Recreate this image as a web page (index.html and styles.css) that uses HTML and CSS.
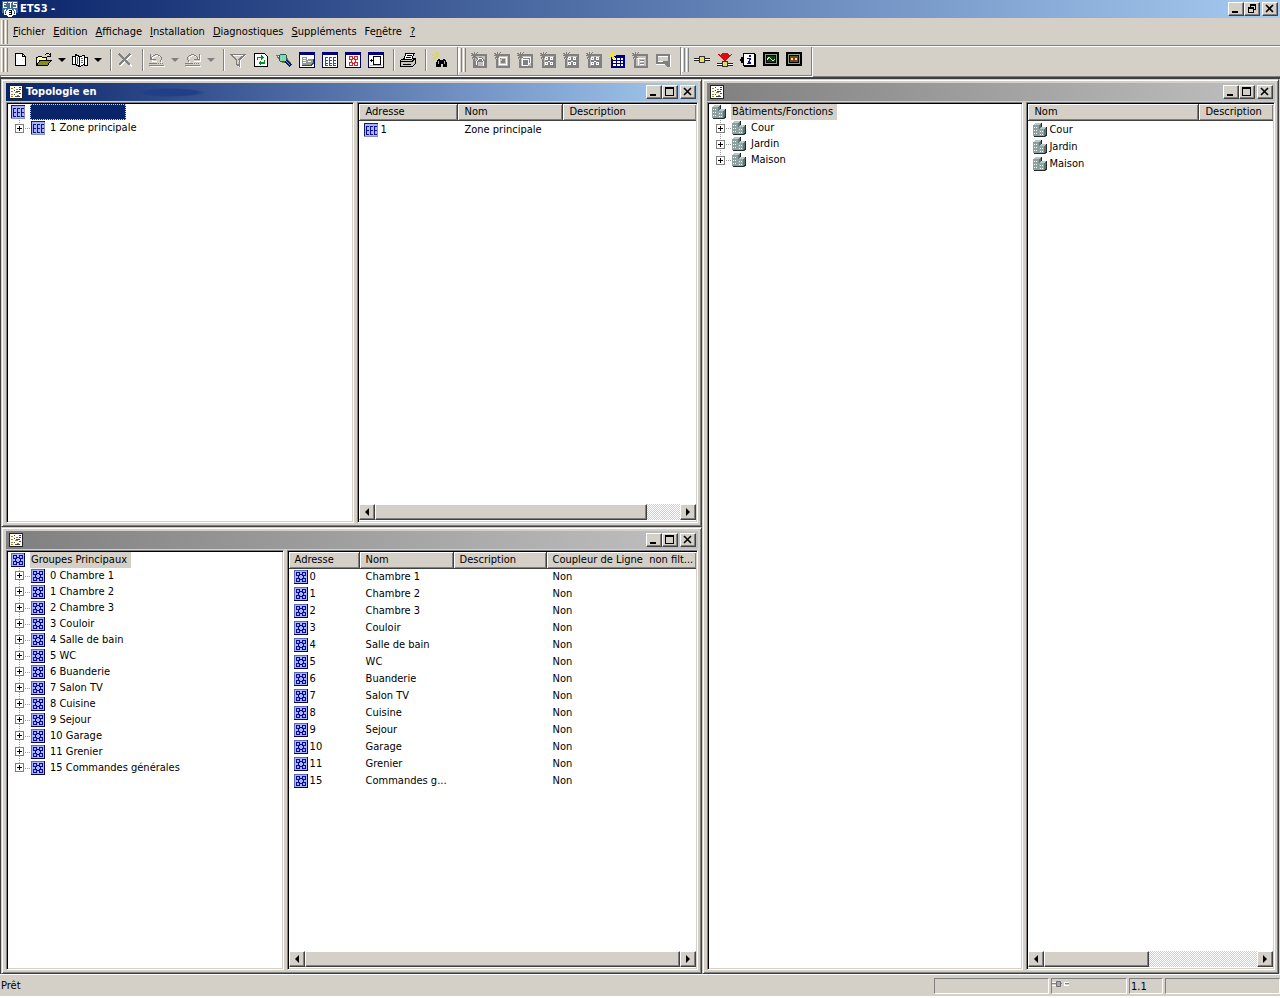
FILE: index.html
```html
<!DOCTYPE html>
<html lang="fr">
<head>
    <meta charset="UTF-8">
    <meta name="viewport" content="width=device-width, initial-scale=1.0">
    <title>ETS3</title>
    <link rel="stylesheet" href="styles.css">
</head>
<body>

<!-- Icon set -->
<svg class="sprite" aria-hidden="true">
    <symbol id="i-app" viewBox="0 0 16 16">
        <rect width="16" height="12" fill="#3c6e9c"/>
        <path d="M1 1.500h4M1 3.500h3M1 6.500h4M1.500 1v6M6 1.500h4M8 1v6M11 1.500h4M11.500 1v2.500M11 3.500h4M14.500 3.500v3M11 6.500h4" stroke="#fff" fill="none"/>
        <circle cx="8" cy="12" r="4" fill="#fff"/>
        <path d="M6.500 9.500h3v4h-3M7 11.500h2" stroke="#000" fill="none"/>
        <path d="M3.500 8.500q-2 3 0 6M12.500 8.500q2 3 0 6" stroke="#fff" fill="none"/>
    </symbol>
    <symbol id="i-doc" viewBox="0 0 16 16">
        <rect x="1.500" y="1.500" width="13" height="13" fill="#fff" stroke="#222"/>
        <path d="M3 4.500h2M3 7.500h2M3 10.500h2M3 12.500h2M8 5.500h2M7 8.500h3M9 11.500h2" stroke="#a08a20"/>
        <path d="M6 3.500h1M11 3.500h2M8 7.500h4M6 10.500h1M11 9.500h2M7 12.500h5M6 6.500h1M11 5.500h2" stroke="#444"/>
    </symbol>
    <symbol id="i-zone" viewBox="0 0 16 16">
        <rect x="1" y="1" width="14" height="14" fill="#a8b4f4"/>
        <path d="M1 1.500h14M1.500 1v13" stroke="#102060" fill="none"/>
        <path d="M1 14.500h14M14.500 2v13" stroke="#8890b8" fill="none"/>
        <path d="M3.500 4v9M7.500 4v9M11.500 4v9M3 4.500h3M7 4.500h3M11 4.500h3M3 8.500h3M7 8.500h3M11 8.500h3M3 12.500h3M7 12.500h3M11 12.500h3" stroke="#10108c" fill="none"/>
    </symbol>
    <symbol id="i-group" viewBox="0 0 16 16">
        <rect x="1" y="1" width="14" height="14" fill="#a8b4fc"/>
        <path d="M1 1.500h13M1.500 1v13" stroke="#5c68b0" fill="none"/>
        <path d="M1 14.500h14M14.500 1v14" stroke="#08083c" fill="none"/>
        <path d="M3.500 3.500h3v3h-3zM9.500 3.500h3v3h-3zM3.500 9.500h3v3h-3zM9.500 9.500h3v3h-3zM7 5.500h2M7 10.500h2M5.500 7v2M10.500 7v2" stroke="#0808a0" fill="none"/>
    </symbol>
    <symbol id="i-build" viewBox="0 0 16 16">
        <path d="M1 3l2-2h6v5h4l2-1v8l-2 2H2l-1-1z" fill="#607474"/>
        <path d="M1 3h6v11H1z" fill="#8ca0a0"/>
        <path d="M1 3l2-2h6L7 3z" fill="#b8c8c8"/>
        <path d="M7 7h5v8H7z" fill="#90a4a4"/>
        <path d="M7 7l2-2h6l-3 2z" fill="#b8c8c8"/>
        <path d="M9.500 1v4M14.500 5v8l-2 1.500H2" stroke="#202c2c" fill="none"/>
        <path d="M2 5.500h1M4 5.500h1M2 8.500h1M4 8.500h1M2 11.500h1M4 11.500h1M8 9.500h1M10 9.500h1M8 12.500h1M10 12.500h1" stroke="#fff"/>
    </symbol>
    <symbol id="i-new" viewBox="0 0 16 16">
        <path d="M2.500 1.500h7l3 3v9h-10z" fill="#fff" stroke="#000"/>
        <path d="M9.500 1.500v3h3" fill="none" stroke="#000"/>
    </symbol>
    <symbol id="i-open" viewBox="0 0 16 16">
        <path d="M.500 13V5.500h1l1-1h3l1 1h4V8" fill="#ffff9c" stroke="#000"/>
        <path d="M.500 13.500L4 8.500h11L11.500 13.500z" fill="#8c8c18" stroke="#000"/>
        <path d="M9 3q2-3 5 0M14.500 1v3H11" fill="none" stroke="#000"/>
    </symbol>
    <symbol id="i-book" viewBox="0 0 16 16">
        <path d="M.500 4.500h3v8h-3zM12.500 5.500h3v8h-3z" fill="#fff" stroke="#000"/>
        <path d="M3.500 2.500l4 2v10l-4-2zM7.500 4.500l5-1v9l-5 2z" fill="#fff" stroke="#000"/>
        <path d="M5.500 5v7M9 6.500h2M9 8.500h2M9 10.500h2" stroke="#666"/>
    </symbol>
    <symbol id="i-del" viewBox="0 0 16 16">
        <path d="M3 3l12 11M14 3L3 14" stroke="#fff" stroke-width="1.500"/>
        <path d="M2 2l11 11M13 2L2 13" stroke="#808080" stroke-width="2"/>
    </symbol>
    <symbol id="i-undo" viewBox="0 0 16 16">
        <path d="M3 8q2-5 7-4 5 2 2 7M1 14.500h15M3 3v6h5" fill="none" stroke="#fff"/>
        <path d="M2 7q2-5 7-4 6 2 2 7M1.500 2v5.500H7M0 11.500h8M0 13.500h15" fill="none" stroke="#808080"/>
        <path d="M9 11.500h6" stroke="#808080" stroke-dasharray="1"/>
    </symbol>
    <symbol id="i-redo" viewBox="0 0 16 16">
        <path d="M14 8q-2-5-7-4-5 2-2 7M1 14.500h15M15 3v6H9" fill="none" stroke="#fff"/>
        <path d="M13 7q-2-5-7-4-6 2-2 7M14.500 2v5.500H9M0 11.500h8M0 13.500h15" fill="none" stroke="#808080"/>
        <path d="M9 11.500h6" stroke="#808080" stroke-dasharray="1"/>
    </symbol>
    <symbol id="i-filter" viewBox="0 0 16 16">
        <path d="M2 3h14l-6 6v6l-2-1" fill="none" stroke="#fff"/>
        <path d="M1.500 2.500h13L9.500 8v6l-3-2V8z" fill="none" stroke="#808080" stroke-width="1.500"/>
        <path d="M8.500 8l4-4" stroke="#808080"/>
    </symbol>
    <symbol id="i-refresh" viewBox="0 0 16 16">
        <path d="M1.500 1.500h10l3 3v10h-13z" fill="#fff" stroke="#000"/>
        <path d="M4.500 8V5.500h4M11.500 8v3h-4" stroke="#088c28" stroke-width="1.500" fill="none"/>
        <path d="M8 3v5l3-2.500zM8 8.500v5L5 11z" fill="#088c28"/>
    </symbol>
    <symbol id="i-find" viewBox="0 0 16 16">
        <path d="M0 3h8l6 7H6z" fill="#fff" stroke="#77774a"/>
        <circle cx="7" cy="6" r="4" fill="#84d8b4" stroke="#225c50"/>
        <path d="M10 9l5 5" stroke="#081c70" stroke-width="4"/>
        <path d="M10 9l4 4" stroke="#5c8ce4"/>
    </symbol>
    <symbol id="i-wbuild" viewBox="0 0 16 16">
        <rect x=".500" y=".500" width="15" height="15" fill="#fff" stroke="#000060"/>
        <path d="M0 0h16v3H0z" fill="#000080"/>
        <path d="M3 5h5v9H3zM8 8l2-1h4v5l-2 2H8z" fill="#909898"/>
        <path d="M3 13.500h9l2-2V7" fill="none" stroke="#444"/>
        <path d="M4 6.500h3M4 8.500h3M4 10.500h3M9 9.500h3" stroke="#fff"/>
    </symbol>
    <symbol id="i-wtable" viewBox="0 0 16 16">
        <rect x=".500" y=".500" width="15" height="15" fill="#fff" stroke="#000060"/>
        <path d="M0 0h16v3H0z" fill="#000080"/>
        <path d="M3 5.500h3M7 5.500h3M11 5.500h3M3 8.500h3M7 8.500h3M11 8.500h3M3 11.500h3M7 11.500h3M11 11.500h3M3 13.500h3M7 13.500h3M11 13.500h3M3.500 5v9M7.500 5v9M11.500 5v9" stroke="#3048a0"/>
    </symbol>
    <symbol id="i-wgroup" viewBox="0 0 16 16">
        <rect x=".500" y=".500" width="15" height="15" fill="#fff" stroke="#000060"/>
        <path d="M0 0h16v3H0z" fill="#000080"/>
        <path d="M4.500 4.500h3v3h-3zM9.500 4.500h3v3h-3zM4.500 10.500h3v3h-3zM9.500 10.500h3v3h-3zM8 6.500h1M8 11.500h1M6.500 8v2M10.500 8v2" stroke="#d02828" fill="none"/>
    </symbol>
    <symbol id="i-wdev" viewBox="0 0 16 16">
        <rect x=".500" y=".500" width="15" height="15" fill="#fff" stroke="#000060"/>
        <path d="M0 0h16v3H0z" fill="#000080"/>
        <path d="M5.500 4.500h7v8h-7zM2 8.500h3M3.500 7v3" fill="#fff" stroke="#000"/>
        <path d="M2 13.500h12" stroke="#bbb"/>
    </symbol>
    <symbol id="i-print" viewBox="0 0 16 16">
        <path d="M.500 8.500l3-2h12v5l-3 3H.500z" fill="#c8c4bc" stroke="#000"/>
        <path d="M4 7l2-5.500h8L12 7z" fill="#fff" stroke="#000"/>
        <path d="M7 3.500h5M6 5.500h5M1 9.500h11l3-3M3 12.500h8" stroke="#000" fill="none"/>
        <path d="M8 11.500h2" stroke="#d0c020"/>
    </symbol>
    <symbol id="i-binoc" viewBox="0 0 16 16">
        <path d="M0 2.500h2M3.500 0v2M3 5.500l3-2M5 1.500h2M1 5.500h2" stroke="#e0dc30" stroke-width="2"/>
        <path d="M6 7h2v1h3V7h2l2 4v4h-4v-3H9v3H4v-4z" fill="#000"/>
        <path d="M6.500 9v3M12.500 9v3" stroke="#aaa"/>
    </symbol>
    <symbol id="i-star" viewBox="0 0 16 16">
        <path d="M5 15.500h10.500V4" stroke="#fff" fill="none"/>
        <path d="M6 3h9v12H3V7" fill="#c4c0b8" stroke="#808080" stroke-width="2"/>
        <path d="M0 1l7 6M3.500 0v8M7 0L1 7M0 3.500h8" stroke="#808080" stroke-width="1.200" fill="none"/>
    </symbol>
    <symbol id="i-n1" viewBox="0 0 16 16">
        <use href="#i-star"/>
        <path d="M4 14v-4l4-5h3l4 5v4h-3v-4H7v4z" fill="#808080"/>
        <path d="M5.500 13v-3l3-4h2l2 4v4" fill="none" stroke="#fff"/>
    </symbol>
    <symbol id="i-n2" viewBox="0 0 16 16">
        <use href="#i-star"/>
        <path d="M5.500 5.500h7v7h-7z" fill="none" stroke="#fff"/>
        <path d="M8 7h3v4H7z" fill="#808080"/>
    </symbol>
    <symbol id="i-n3" viewBox="0 0 16 16">
        <use href="#i-star"/>
        <path d="M5 7l2-2h6v6l-2 2H5z" fill="#808080" stroke="#fff"/>
        <path d="M5 7.500h6v5" fill="none" stroke="#fff"/>
    </symbol>
    <symbol id="i-n4" viewBox="0 0 16 16">
        <use href="#i-star"/>
        <path d="M5 5h9v9H5z" fill="#808080"/>
        <path d="M5.500 5.500h2v2h-2zM10.500 5.500h2v2h-2zM5.500 10.500h2v2h-2zM10.500 10.500h2v2h-2zM8 9.500h2" fill="none" stroke="#fff"/>
    </symbol>
    <symbol id="i-n5" viewBox="0 0 16 16">
        <rect x="3" y="4" width="12" height="11" fill="#fff" stroke="#000080" stroke-width="2"/>
        <path d="M3 4h12v2H3z" fill="#000080"/>
        <path d="M4 8.500h10M4 11.500h10M7.500 6v8M11.500 6v8" stroke="#000080"/>
        <path d="M0 1l6 5M3.500 0v7M6 0L1 6M0 3.500h7" stroke="#ece43c" stroke-width="1.500"/>
    </symbol>
    <symbol id="i-n6" viewBox="0 0 16 16">
        <use href="#i-star"/>
        <path d="M5 6.500h8M8 9.500h4M8 12.500h4M6.500 6v7" stroke="#fff"/>
        <path d="M8 8h4M8 11h4" stroke="#808080"/>
    </symbol>
    <symbol id="i-n7" viewBox="0 0 16 16">
        <path d="M1 12.500h9M15.500 3v12" stroke="#fff"/>
        <path d="M2 3h12v8H2z" fill="#d4d0c8" stroke="#808080" stroke-width="2"/>
        <path d="M8 9h7v6h-2l-5-4z" fill="#808080"/>
        <path d="M3 9.500h5M3 4.500h10" stroke="#fff"/>
    </symbol>
    <symbol id="i-bus" viewBox="0 0 16 16">
        <path d="M0 7.500h16" stroke="#fff" stroke-width="3"/>
        <path d="M0 6.500h5M11 8.500h5M0 8.500h5M11 6.500h5" stroke="#222"/>
        <rect x="5.500" y="4.500" width="5" height="6" fill="#e8dc68" stroke="#333"/>
    </symbol>
    <symbol id="i-down" viewBox="0 0 16 16">
        <path d="M0 12.500h16" stroke="#fff" stroke-width="3"/>
        <path d="M0 11.500h5M0 13.500h5M11 11.500h5M11 13.500h5" stroke="#222"/>
        <rect x="5.500" y="9.500" width="5" height="5" fill="#e8dc68" stroke="#333"/>
        <path d="M1 2l3 1 1-2h6l1 2 3-1-7 8z" fill="#dc0c0c"/>
    </symbol>
    <symbol id="i-info" viewBox="0 0 16 16">
        <rect x="3.500" y="1.500" width="11" height="12" fill="#fff" stroke="#000"/>
        <path d="M2 5v6M0 8h3" stroke="#000" stroke-width="2"/>
        <path d="M15.500 2v12.500H4" stroke="#000" fill="none"/>
        <path d="M9 3h2v2H9zM7 6h4l-1 4h1v2H7v-1h1l1-4H7z" fill="#1010a0"/>
    </symbol>
    <symbol id="i-scope" viewBox="0 0 16 16">
        <rect x="1" y="1" width="14" height="12" fill="#88a480" stroke="#000" stroke-width="2"/>
        <rect x="3.500" y="3.500" width="9" height="7" fill="#14381c" stroke="#000"/>
        <path d="M4 8q2-4 4-1t4 0" stroke="#c8f0b0" fill="none"/>
    </symbol>
    <symbol id="i-scope2" viewBox="0 0 16 16">
        <rect x="1" y="1" width="14" height="12" fill="#88a480" stroke="#000" stroke-width="2"/>
        <rect x="3.500" y="3.500" width="9" height="7" fill="#74441c" stroke="#000"/>
        <path d="M5 7h2M9 7h2" stroke="#fce090" stroke-width="2"/>
    </symbol>
    <symbol id="i-plug" viewBox="0 0 18 8">
        <path d="M0 2.500h4M0 5.500h4M12.500 2v4M12 2.500h5M12 5.500h5" stroke="#fff"/>
        <path d="M0 3.500h4M9 3.500h1M13 3.500h4" stroke="#808080"/>
        <path d="M4.500 1.500h4v5h-4z" fill="#aaa" stroke="#707070"/>
    </symbol>
    <symbol id="i-min" viewBox="0 0 12 10"><path d="M2 7h6v2H2z"/></symbol>
    <symbol id="i-max" viewBox="0 0 12 10"><path d="M1 0h9v9H1zM2 2v6h7V2z" fill-rule="evenodd"/></symbol>
    <symbol id="i-rest" viewBox="0 0 12 10"><path d="M4 0h6v6H8V5h1V2H5v1H4zM2 3h6v6H2zM3 5v3h4V5z" fill-rule="evenodd"/></symbol>
    <symbol id="i-close" viewBox="0 0 12 10"><path d="M2 1l7 7M9 1L2 8" stroke="#000" stroke-width="1.600"/></symbol>
    <symbol id="i-left" viewBox="0 0 8 8"><path d="M6 0v8L2 4z"/></symbol>
    <symbol id="i-right" viewBox="0 0 8 8"><path d="M2 0v8l4-4z"/></symbol>
    <symbol id="i-plus" viewBox="0 0 7 7"><path d="M1 3h5v1H1zM3 1h1v5H3z"/></symbol>
</svg>

<div class="app">

    <header class="titlebar titlebar-app">
        <svg class="icon"><use href="#i-app"/></svg>
        <h1 class="title">ETS3 -</h1>
        <div class="win-buttons">
            <button aria-label="Réduire"><svg><use href="#i-min"/></svg></button>
            <button aria-label="Restaurer"><svg><use href="#i-rest"/></svg></button>
            <button class="close" aria-label="Fermer"><svg><use href="#i-close"/></svg></button>
        </div>
    </header>

    <nav class="menubar">
        <span class="grip"></span>
        <button><u>F</u>ichier</button>
        <button><u>E</u>dition</button>
        <button><u>A</u>ffichage</button>
        <button><u>I</u>nstallation</button>
        <button><u>D</u>iagnostiques</button>
        <button><u>S</u>uppléments</button>
        <button>Fe<u>n</u>être</button>
        <button><u>?</u></button>
    </nav>

    <div class="toolbars">
        <div class="band">
            <span class="grip"></span>
            <button class="tool" aria-label="Nouveau"><svg><use href="#i-new"/></svg></button>
            <button class="tool" aria-label="Ouvrir"><svg><use href="#i-open"/></svg></button>
            <button class="drop" aria-label="Projets récents"></button>
            <button class="tool" aria-label="Catalogue"><svg><use href="#i-book"/></svg></button>
            <button class="drop" aria-label="Catalogues récents"></button>
            <span class="sep"></span>
            <button class="tool" aria-label="Supprimer" disabled><svg><use href="#i-del"/></svg></button>
            <span class="sep"></span>
            <button class="tool" aria-label="Annuler" disabled><svg><use href="#i-undo"/></svg></button>
            <button class="drop" aria-label="Liste annuler" disabled></button>
            <button class="tool" aria-label="Rétablir" disabled><svg><use href="#i-redo"/></svg></button>
            <button class="drop" aria-label="Liste rétablir" disabled></button>
            <span class="sep"></span>
            <button class="tool" aria-label="Filtre" disabled><svg><use href="#i-filter"/></svg></button>
            <button class="tool" aria-label="Actualiser"><svg><use href="#i-refresh"/></svg></button>
            <button class="tool" aria-label="Recherche de produits"><svg><use href="#i-find"/></svg></button>
            <button class="tool" aria-label="Vue bâtiments"><svg><use href="#i-wbuild"/></svg></button>
            <button class="tool" aria-label="Vue topologie"><svg><use href="#i-wtable"/></svg></button>
            <button class="tool" aria-label="Vue groupes"><svg><use href="#i-wgroup"/></svg></button>
            <button class="tool" aria-label="Vue participants"><svg><use href="#i-wdev"/></svg></button>
            <span class="sep"></span>
            <button class="tool" aria-label="Imprimer"><svg><use href="#i-print"/></svg></button>
            <span class="sep"></span>
            <button class="tool" aria-label="Rechercher"><svg><use href="#i-binoc"/></svg></button>
        </div>
        <div class="band">
            <span class="grip"></span>
            <button class="tool" aria-label="Ajouter bâtiment" disabled><svg><use href="#i-n1"/></svg></button>
            <button class="tool" aria-label="Ajouter pièce" disabled><svg><use href="#i-n2"/></svg></button>
            <button class="tool" aria-label="Ajouter armoire" disabled><svg><use href="#i-n3"/></svg></button>
            <button class="tool" aria-label="Ajouter groupe principal" disabled><svg><use href="#i-n4"/></svg></button>
            <button class="tool" aria-label="Ajouter groupe médian" disabled><svg><use href="#i-n4"/></svg></button>
            <button class="tool" aria-label="Ajouter adresse de groupe" disabled><svg><use href="#i-n4"/></svg></button>
            <button class="tool" aria-label="Ajouter zone"><svg><use href="#i-n5"/></svg></button>
            <button class="tool" aria-label="Ajouter ligne" disabled><svg><use href="#i-n6"/></svg></button>
            <button class="tool" aria-label="Ajouter participant" disabled><svg><use href="#i-n7"/></svg></button>
        </div>
        <div class="band">
            <span class="grip"></span>
            <button class="tool" aria-label="Connexion bus"><svg><use href="#i-bus"/></svg></button>
            <button class="tool" aria-label="Télécharger"><svg><use href="#i-down"/></svg></button>
            <button class="tool" aria-label="Info participant"><svg><use href="#i-info"/></svg></button>
            <button class="tool" aria-label="Moniteur de bus"><svg><use href="#i-scope"/></svg></button>
            <button class="tool" aria-label="Moniteur de groupe"><svg><use href="#i-scope2"/></svg></button>
        </div>
    </div>

    <main class="workspace">

        <!-- Topology -->
        <section class="window win-topo">
            <div class="titlebar titlebar-active">
                <svg class="icon"><use href="#i-doc"/></svg>
                <h2 class="title">Topologie en</h2>
                <div class="win-buttons">
                    <button aria-label="Réduire"><svg><use href="#i-min"/></svg></button>
                    <button aria-label="Agrandir"><svg><use href="#i-max"/></svg></button>
                    <button class="close" aria-label="Fermer"><svg><use href="#i-close"/></svg></button>
                </div>
            </div>
            <div class="panes">
                <div class="pane">
                    <div class="root"><svg class="icon"><use href="#i-zone"/></svg><span class="label selected"></span></div>
                    <ul class="tree">
                        <li><button class="expand" aria-label="Développer"><svg><use href="#i-plus"/></svg></button><svg class="icon"><use href="#i-zone"/></svg><span>1 Zone principale</span></li>
                    </ul>
                </div>
                <div class="pane">
                    <div class="list">
                        <table>
                            <colgroup><col class="col-99"><col class="col-105"><col></colgroup>
                            <thead><tr><th>Adresse</th><th>Nom</th><th>Description</th></tr></thead>
                            <tbody>
                                <tr><td><svg class="icon"><use href="#i-zone"/></svg>1</td><td>Zone principale</td><td></td></tr>
                            </tbody>
                        </table>
                    </div>
                    <div class="scrollbar">
                        <button aria-label="Gauche"><svg><use href="#i-left"/></svg></button>
                        <div class="track"><div class="thumb thumb-topo"></div></div>
                        <button aria-label="Droite"><svg><use href="#i-right"/></svg></button>
                    </div>
                </div>
            </div>
        </section>

        <!-- Buildings -->
        <section class="window win-build">
            <div class="titlebar">
                <svg class="icon"><use href="#i-doc"/></svg>
                <div class="win-buttons">
                    <button aria-label="Réduire"><svg><use href="#i-min"/></svg></button>
                    <button aria-label="Agrandir"><svg><use href="#i-max"/></svg></button>
                    <button class="close" aria-label="Fermer"><svg><use href="#i-close"/></svg></button>
                </div>
            </div>
            <div class="panes">
                <div class="pane">
                    <div class="root"><svg class="icon"><use href="#i-build"/></svg><span class="label">Bâtiments/Fonctions</span></div>
                    <ul class="tree">
                        <li><button class="expand" aria-label="Développer"><svg><use href="#i-plus"/></svg></button><svg class="icon"><use href="#i-build"/></svg><span>Cour</span></li>
                        <li><button class="expand" aria-label="Développer"><svg><use href="#i-plus"/></svg></button><svg class="icon"><use href="#i-build"/></svg><span>Jardin</span></li>
                        <li><button class="expand" aria-label="Développer"><svg><use href="#i-plus"/></svg></button><svg class="icon"><use href="#i-build"/></svg><span>Maison</span></li>
                    </ul>
                </div>
                <div class="pane">
                    <div class="list">
                        <table>
                            <colgroup><col class="col-171"><col></colgroup>
                            <thead><tr><th>Nom</th><th>Description</th></tr></thead>
                            <tbody>
                                <tr><td><svg class="icon"><use href="#i-build"/></svg>Cour</td><td></td></tr>
                                <tr><td><svg class="icon"><use href="#i-build"/></svg>Jardin</td><td></td></tr>
                                <tr><td><svg class="icon"><use href="#i-build"/></svg>Maison</td><td></td></tr>
                            </tbody>
                        </table>
                    </div>
                    <div class="scrollbar">
                        <button aria-label="Gauche"><svg><use href="#i-left"/></svg></button>
                        <div class="track"><div class="thumb thumb-build"></div></div>
                        <button aria-label="Droite"><svg><use href="#i-right"/></svg></button>
                    </div>
                </div>
            </div>
        </section>

        <!-- Group addresses -->
        <section class="window win-group">
            <div class="titlebar">
                <svg class="icon"><use href="#i-doc"/></svg>
                <div class="win-buttons">
                    <button aria-label="Réduire"><svg><use href="#i-min"/></svg></button>
                    <button aria-label="Agrandir"><svg><use href="#i-max"/></svg></button>
                    <button class="close" aria-label="Fermer"><svg><use href="#i-close"/></svg></button>
                </div>
            </div>
            <div class="panes">
                <div class="pane">
                    <div class="root"><svg class="icon"><use href="#i-group"/></svg><span class="label">Groupes Principaux</span></div>
                    <ul class="tree">
                        <li><button class="expand" aria-label="Développer"><svg><use href="#i-plus"/></svg></button><svg class="icon"><use href="#i-group"/></svg><span>0 Chambre 1</span></li>
                        <li><button class="expand" aria-label="Développer"><svg><use href="#i-plus"/></svg></button><svg class="icon"><use href="#i-group"/></svg><span>1 Chambre 2</span></li>
                        <li><button class="expand" aria-label="Développer"><svg><use href="#i-plus"/></svg></button><svg class="icon"><use href="#i-group"/></svg><span>2 Chambre 3</span></li>
                        <li><button class="expand" aria-label="Développer"><svg><use href="#i-plus"/></svg></button><svg class="icon"><use href="#i-group"/></svg><span>3 Couloir</span></li>
                        <li><button class="expand" aria-label="Développer"><svg><use href="#i-plus"/></svg></button><svg class="icon"><use href="#i-group"/></svg><span>4 Salle de bain</span></li>
                        <li><button class="expand" aria-label="Développer"><svg><use href="#i-plus"/></svg></button><svg class="icon"><use href="#i-group"/></svg><span>5 WC</span></li>
                        <li><button class="expand" aria-label="Développer"><svg><use href="#i-plus"/></svg></button><svg class="icon"><use href="#i-group"/></svg><span>6 Buanderie</span></li>
                        <li><button class="expand" aria-label="Développer"><svg><use href="#i-plus"/></svg></button><svg class="icon"><use href="#i-group"/></svg><span>7 Salon TV</span></li>
                        <li><button class="expand" aria-label="Développer"><svg><use href="#i-plus"/></svg></button><svg class="icon"><use href="#i-group"/></svg><span>8 Cuisine</span></li>
                        <li><button class="expand" aria-label="Développer"><svg><use href="#i-plus"/></svg></button><svg class="icon"><use href="#i-group"/></svg><span>9 Sejour</span></li>
                        <li><button class="expand" aria-label="Développer"><svg><use href="#i-plus"/></svg></button><svg class="icon"><use href="#i-group"/></svg><span>10 Garage</span></li>
                        <li><button class="expand" aria-label="Développer"><svg><use href="#i-plus"/></svg></button><svg class="icon"><use href="#i-group"/></svg><span>11 Grenier</span></li>
                        <li><button class="expand" aria-label="Développer"><svg><use href="#i-plus"/></svg></button><svg class="icon"><use href="#i-group"/></svg><span>15 Commandes générales</span></li>
                    </ul>
                </div>
                <div class="pane">
                    <div class="list">
                        <table>
                            <colgroup><col class="col-71"><col class="col-94"><col class="col-93"><col></colgroup>
                            <thead><tr><th>Adresse</th><th>Nom</th><th>Description</th><th>Coupleur de Ligne&nbsp; non filt...</th></tr></thead>
                            <tbody>
                                <tr><td><svg class="icon"><use href="#i-group"/></svg>0</td><td>Chambre 1</td><td></td><td>Non</td></tr>
                                <tr><td><svg class="icon"><use href="#i-group"/></svg>1</td><td>Chambre 2</td><td></td><td>Non</td></tr>
                                <tr><td><svg class="icon"><use href="#i-group"/></svg>2</td><td>Chambre 3</td><td></td><td>Non</td></tr>
                                <tr><td><svg class="icon"><use href="#i-group"/></svg>3</td><td>Couloir</td><td></td><td>Non</td></tr>
                                <tr><td><svg class="icon"><use href="#i-group"/></svg>4</td><td>Salle de bain</td><td></td><td>Non</td></tr>
                                <tr><td><svg class="icon"><use href="#i-group"/></svg>5</td><td>WC</td><td></td><td>Non</td></tr>
                                <tr><td><svg class="icon"><use href="#i-group"/></svg>6</td><td>Buanderie</td><td></td><td>Non</td></tr>
                                <tr><td><svg class="icon"><use href="#i-group"/></svg>7</td><td>Salon TV</td><td></td><td>Non</td></tr>
                                <tr><td><svg class="icon"><use href="#i-group"/></svg>8</td><td>Cuisine</td><td></td><td>Non</td></tr>
                                <tr><td><svg class="icon"><use href="#i-group"/></svg>9</td><td>Sejour</td><td></td><td>Non</td></tr>
                                <tr><td><svg class="icon"><use href="#i-group"/></svg>10</td><td>Garage</td><td></td><td>Non</td></tr>
                                <tr><td><svg class="icon"><use href="#i-group"/></svg>11</td><td>Grenier</td><td></td><td>Non</td></tr>
                                <tr><td><svg class="icon"><use href="#i-group"/></svg>15</td><td>Commandes g...</td><td></td><td>Non</td></tr>
                            </tbody>
                        </table>
                    </div>
                    <div class="scrollbar">
                        <button aria-label="Gauche"><svg><use href="#i-left"/></svg></button>
                        <div class="track"><div class="thumb"></div></div>
                        <button aria-label="Droite"><svg><use href="#i-right"/></svg></button>
                    </div>
                </div>
            </div>
        </section>

    </main>

    <footer class="statusbar">
        <span class="status-text">Prêt</span>
        <span class="cell cell-wide"></span>
        <span class="cell cell-plug"><svg><use href="#i-plug"/></svg></span>
        <span class="cell cell-addr">1.1</span>
        <span class="cell cell-wide"></span>
    </footer>

</div>

</body>
</html>
```

FILE: styles.css
```css
* {
    box-sizing: border-box;
}
body {
    margin: 0;
    background: #d4d0c8;
    color: #000;
    font-family: "DejaVu Sans Condensed", "DejaVu Sans", Tahoma, sans-serif;
    font-size: 11px;
    line-height: 16px;
}
button {
    margin: 0;
    padding: 0;
    border: none;
    background: none;
    color: inherit;
    font: inherit;
}
.sprite {
    display: none;
}
.app {
    display: flex;
    flex-direction: column;
    height: 100vh;
}
.icon {
    width: 16px;
    height: 16px;
    flex: none;
    shape-rendering: crispEdges;
}

/* Title bars */
.titlebar {
    display: flex;
    align-items: center;
    gap: 2px;
    height: 18px;
    flex: none;
    padding: 0 2px;
    background: linear-gradient(to right, #808080, #c0c0c0);
}
.titlebar-app,
.titlebar-active {
    background: linear-gradient(to right, #0a246a, #a6caf0);
    color: #fff;
}
.titlebar-active {
    background:
        radial-gradient(closest-side, #1f3f86 70%, transparent) 130px 5px / 70px 9px no-repeat,
        linear-gradient(to right, #0a246a, #a6caf0);
}
.title {
    margin: 0;
    font-size: 11px;
    font-weight: bold;
}
.win-buttons {
    display: flex;
    margin-left: auto;
}
.win-buttons button,
.scrollbar button,
.thumb {
    background: #d4d0c8;
    border: 1px solid;
    border-color: #fff #404040 #404040 #fff;
    box-shadow: inset -1px -1px #808080;
}
.win-buttons button {
    display: flex;
    align-items: center;
    justify-content: center;
    width: 16px;
    height: 14px;
}
.win-buttons svg {
    width: 12px;
    height: 10px;
}
.win-buttons .close {
    margin-left: 2px;
}

/* Menu and tool bars */
.menubar {
    display: flex;
    align-items: center;
    height: 28px;
    flex: none;
    padding-top: 1px;
    border-bottom: 1px solid #808080;
}
.menubar button {
    padding: 0 4px;
}
.grip {
    width: 9px;
    height: 24px;
    flex: none;
    background:
        linear-gradient(to right, #fff 1px, #d4d0c8 1px, #d4d0c8 2px, #808080 2px) 1px 0 / 3px 100% no-repeat,
        linear-gradient(to right, #fff 1px, #d4d0c8 1px, #d4d0c8 2px, #808080 2px) 5px 0 / 3px 100% no-repeat;
}
.toolbars {
    display: flex;
    height: 31px;
    flex: none;
    border-top: 1px solid #fff;
    border-bottom: 1px solid #808080;
}
.band {
    display: flex;
    align-items: center;
    height: 29px;
    padding: 0 6px 2px 0;
    border-bottom: 1px solid #808080;
    border-right: 1px solid #808080;
    box-shadow: 1px 1px #fff;
}
.tool {
    display: flex;
    align-items: center;
    justify-content: center;
    width: 23px;
    height: 22px;
}
.tool svg {
    width: 16px;
    height: 16px;
    shape-rendering: crispEdges;
}
.drop {
    width: 13px;
    height: 22px;
}
.drop::before {
    content: "";
    display: block;
    margin: 0 auto;
    width: 0;
    border: solid transparent;
    border-width: 4px 4px 0;
    border-top-color: #000;
}
.drop:disabled::before {
    border-top-color: #808080;
}
.sep {
    width: 9px;
    height: 22px;
    background: linear-gradient(to right, #808080 1px, #fff 1px) 6px 0 / 2px 100% no-repeat;
}

/* MDI windows */
.workspace {
    display: grid;
    grid-template-columns: 701fr 577fr;
    grid-template-rows: 1fr 1fr;
    flex: 1;
    min-height: 0;
    border: solid #404040;
    border-width: 2px 0 0 1px;
    padding-right: 1px;
}
.window {
    display: flex;
    flex-direction: column;
    min-width: 0;
    min-height: 0;
    border: 1px solid;
    border-color: #d4d0c8 #404040 #404040 #d4d0c8;
    box-shadow: inset 1px 1px #fff, inset -1px -1px #808080;
    padding: 3px 3px 3px 4px;
}
.win-build {
    grid-column: 2;
    grid-row: 1 / 3;
}
.panes {
    display: grid;
    gap: 3px;
    flex: 1;
    min-height: 0;
    margin-top: 1px;
}
.win-topo .panes {
    grid-template-columns: 349fr 341fr;
}
.win-group .panes {
    grid-template-columns: 278fr 412fr;
}
.win-build .panes {
    grid-template-columns: 317fr 249fr;
}
.pane {
    display: flex;
    flex-direction: column;
    min-width: 0;
    min-height: 0;
    background: #fff;
    border: 1px solid;
    border-color: #808080 #fff #fff #808080;
    box-shadow: inset 1px 1px #000, inset -1px -1px #d4d0c8;
    padding: 1px 1px 2px;
}

/* Tree */
.root {
    display: flex;
    align-items: center;
    height: 16px;
    margin-left: 2px;
    gap: 4px;
}
.label {
    height: 16px;
    padding: 0 4px 0 1px;
    background: #d4d0c8;
}
.selected {
    width: 96px;
    background: #0a246a;
    border: 1px dotted #f5db95;
}
.tree {
    margin: 0;
    padding: 0 0 0 7px;
    list-style: none;
}
.tree li {
    display: flex;
    align-items: center;
    height: 16px;
    background:
        repeating-linear-gradient(to bottom, #999 0 1px, #fff 1px 2px) 4px 0 / 1px 100% no-repeat,
        repeating-linear-gradient(to right, #999 0 1px, #fff 1px 2px) 4px 8px / 12px 1px no-repeat;
}
.tree li:last-child {
    background-size: 1px 8px, 12px 1px;
}
.expand {
    display: flex;
    width: 9px;
    height: 9px;
    margin-right: 6px;
    border: 1px solid #808080;
    background: #fff;
}
.expand svg {
    width: 7px;
    height: 7px;
}
.tree span {
    margin-left: 4px;
}

/* List */
.list {
    flex: 1;
    overflow: hidden;
}
table {
    width: 100%;
    table-layout: fixed;
    border-collapse: separate;
    border-spacing: 0;
}
th,
td {
    height: 17px;
    padding: 0 0 0 6px;
    overflow: hidden;
    text-align: left;
    font-weight: normal;
    line-height: 16px;
    white-space: nowrap;
}
th {
    background: #d4d0c8;
    border-bottom: 1px solid #404040;
    border-right: 1px solid #404040;
    box-shadow: inset 1px 1px #fff, inset -1px -1px #808080;
}
th:last-child {
    border-right: none;
}
td:first-child {
    padding-left: 4px;
}
td .icon {
    margin-right: 1px;
    vertical-align: top;
}
.col-71 {
    width: 71px;
}
.col-93 {
    width: 93px;
}
.col-94 {
    width: 94px;
}
.col-99 {
    width: 99px;
}
.col-105 {
    width: 105px;
}
.col-171 {
    width: 171px;
}

/* Scrollbar */
.scrollbar {
    display: flex;
    height: 16px;
    flex: none;
}
.scrollbar button {
    display: flex;
    align-items: center;
    justify-content: center;
    width: 16px;
    height: 16px;
}
.scrollbar svg {
    width: 8px;
    height: 8px;
}
.track {
    flex: 1;
    background: repeating-conic-gradient(#fff 0 25%, #d4d0c8 0 50%) 0 0 / 2px 2px;
}
.thumb {
    height: 16px;
}
.thumb-topo {
    width: 89%;
}
.thumb-build {
    width: 49%;
}

/* Status bar */
.statusbar {
    display: flex;
    align-items: center;
    gap: 2px;
    height: 24px;
    flex: none;
    border-top: 1px solid #fff;
    border-bottom: 2px solid #fff;
}
.status-text {
    flex: 1;
    padding-left: 1px;
}
.cell {
    display: flex;
    height: 16px;
    border: 1px solid;
    border-color: #808080 #fff #fff #808080;
}
.cell-wide {
    width: 115px;
}
.cell-plug {
    width: 76px;
}
.cell-plug svg {
    width: 18px;
    height: 8px;
    margin-top: 1px;
}
.cell-addr {
    width: 34px;
    padding-left: 1px;
}
```
